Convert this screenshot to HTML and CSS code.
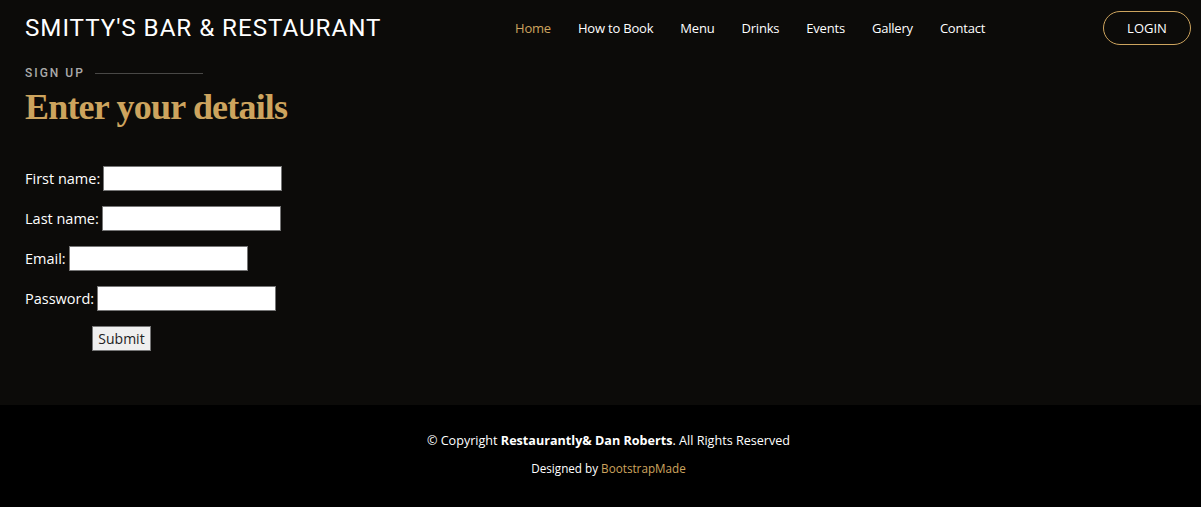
FILE: index.html
```html
<!DOCTYPE html>
<html lang="en">
<head>
<meta charset="utf-8">
<title>Smitty's Bar & Restaurant - Sign up</title>
<link rel="stylesheet" href="styles.css">
</head>
<body>
<header class="header">
  <div class="logo">SMITTY'S BAR &amp; RESTAURANT</div>
  <nav class="navbar">
    <a class="active" href="#">Home</a>
    <a href="#">How to Book</a>
    <a href="#">Menu</a>
    <a href="#">Drinks</a>
    <a href="#">Events</a>
    <a href="#">Gallery</a>
    <a href="#">Contact</a>
  </nav>
  <a class="login-btn" href="#">LOGIN</a>
</header>
<main class="main">
  <div class="section-title">
    <p class="eyebrow">SIGN UP</p>
    <h2 class="title">Enter your details</h2>
  </div>
  <form class="signup">
    <div class="row"><label for="fn">First name:</label><input id="fn" type="text"></div>
    <div class="row"><label for="ln">Last name:</label><input id="ln" type="text"></div>
    <div class="row"><label for="em">Email:</label><input id="em" type="text"></div>
    <div class="row"><label for="pw">Password:</label><input id="pw" type="password"></div>
    <div class="row submit-row"><button type="button" class="submit">Submit</button></div>
  </form>
</main>
<footer class="footer">
  <div class="copyright">© Copyright <strong>Restaurantly&amp; Dan Roberts</strong>. All Rights Reserved</div>
  <div class="credits">Designed by <a href="#">BootstrapMade</a></div>
</footer>
</body>
</html>
```

FILE: styles.css
```css
* { box-sizing: border-box; }
html, body { margin: 0; padding: 0; }
body {
  background: #0c0b09;
  color: #fff;
  font-family: "Open Sans", "Liberation Sans", sans-serif;
  width: 1201px;
  height: 507px;
  overflow: hidden;
}
.header {
  display: flex;
  align-items: center;
  height: 57px;
  padding: 0 10px 2px 25px;
}
.logo {
  font-family: "Roboto", "Open Sans", sans-serif;
  font-size: 24.2px;
  font-weight: 400;
  letter-spacing: 0.95px;
  color: #fff;
  width: 490px;
  white-space: nowrap;
}
.navbar {
  display: flex;
  gap: 27px;
}
.navbar a {
  color: #fff;
  text-decoration: none;
  font-size: 13px;
  font-weight: 500;
  letter-spacing: -0.2px;
}
.navbar a.active { color: #cda45e; }
.login-btn {
  margin-left: auto;
  border: 1px solid #cda45e;
  border-radius: 50px;
  color: #fff;
  text-decoration: none;
  font-size: 13px;
  width: 88px;
  height: 34px;
  display: flex;
  align-items: center;
  justify-content: center;
}
.main {
  padding: 8px 25px 0;
  height: 348px;
}
.eyebrow {
  margin: 0;
  display: flex;
  align-items: center;
  gap: 10px;
  font-family: "Roboto", "Open Sans", sans-serif;
  font-size: 12px;
  font-weight: 500;
  letter-spacing: 2px;
  color: #aaaaaa;
  line-height: 16px;
}
.eyebrow::after {
  content: "";
  width: 108px;
  height: 1px;
  background: rgba(255,255,255,0.25);
}
.title {
  margin: 6px 0 0;
  font-family: "Liberation Serif", "DejaVu Serif", serif;
  font-size: 36px;
  font-weight: 700;
  color: #cda45e;
  line-height: 40px;
  letter-spacing: -0.8px;
}
.signup {
  margin-top: 39px;
  display: flex;
  flex-direction: column;
  gap: 15px;
}
.row {
  display: flex;
  align-items: center;
  gap: 3px;
  font-size: 14.5px;
  height: 25px;
}
.row input {
  width: 179px;
  height: 25px;
  border: 1px solid #767676;
  background: #fff;
  padding: 1px 2px;
}
.submit-row { padding-left: 67px; }
.submit {
  font-family: "Open Sans", sans-serif;
  font-size: 14px;
  height: 25px;
  width: 59px;
  padding: 0;
  background: #efefef;
  color: #222;
  border: 1px solid #767676;
  border-radius: 0;
}
.footer {
  background: #000;
  height: 102px;
  text-align: center;
  padding: 26px 0 0 16px;
}
.copyright {
  font-size: 12.6px;
  line-height: 20px;
}
.credits {
  margin-top: 7px;
  font-size: 11.7px;
  line-height: 20px;
}
.credits a { color: #cda45e; text-decoration: none; }
```
